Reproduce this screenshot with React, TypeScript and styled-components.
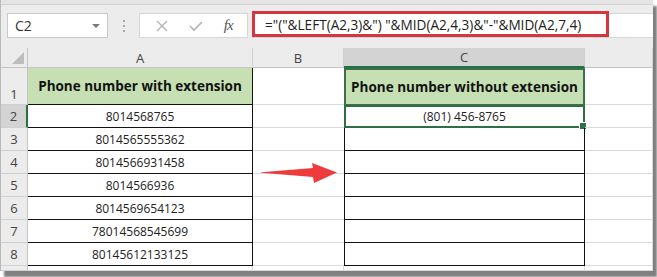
import styled, { createGlobalStyle, css } from "styled-components";

const GlobalStyle = createGlobalStyle`
  html, body {
    margin: 0;
    padding: 0;
    background: #ffffff;
  }
  * {
    box-sizing: border-box;
  }
`;

const Page = styled.div`
  width: 657px;
  height: 277px;
  background: #ffffff;
  overflow: hidden;
`;

const Window = styled.div`
  width: 653px;
  height: 271px;
  display: flex;
  flex-direction: column;
  background: #ececec;
  border-left: 1px solid #b9b9b9;
  box-shadow: 4px 6px 2px rgba(0, 0, 0, 0.5);
  font-family: "Open Sans", "Noto Sans", sans-serif;
  color: #222;
`;

const TopStrip = styled.div`
  height: 5px;
  background: #e4e4e4;
  border-bottom: 1px solid #d2d2d2;
`;

const Toolbar = styled.div`
  height: 43px;
  display: flex;
  align-items: flex-start;
  padding: 8px 0 0 6px;
`;

const NameBox = styled.div`
  width: 101px;
  height: 25px;
  display: flex;
  align-items: center;
  justify-content: space-between;
  padding: 0 7px 0 7px;
  background: #fff;
  border: 1px solid #c9c9c9;
  font-size: 14px;
  color: #333;
`;

const DropArrow = styled.span`
  width: 0;
  height: 0;
  border-left: 4px solid transparent;
  border-right: 4px solid transparent;
  border-top: 4px solid #7a7a7a;
`;

const Grip = styled.div`
  width: 31px;
  height: 25px;
  display: flex;
  flex-direction: column;
  align-items: center;
  justify-content: center;
  gap: 3px;
`;

const GripDot = styled.span`
  width: 2px;
  height: 2px;
  background: #a9a9a9;
`;

const FuncBox = styled.div`
  width: 109px;
  height: 25px;
  display: flex;
  align-items: center;
  justify-content: space-around;
  padding: 0 4px 0 6px;
  margin-right: 4px;
  background: #fff;
  border: 1px solid #d6d6d6;
`;

const Fx = styled.span`
  font-family: "Liberation Serif", serif;
  font-style: italic;
  font-size: 15px;
  color: #555;
  letter-spacing: -1px;
`;

const FormulaInput = styled.div`
  flex: 1;
  height: 25px;
  display: flex;
  align-items: flex-start;
  background: #fff;
  border-top: 1px solid #d6d6d6;
  border-bottom: 1px solid #d6d6d6;
`;

const Highlight = styled.div`
  width: 357px;
  height: 26px;
  margin-top: -3px;
  display: flex;
  align-items: center;
  padding-left: 10px;
  border: 3px solid #d7353d;
  font-size: 13.6px;
  color: #222;
  white-space: pre;
`;

const SheetWrap = styled.div`
  position: relative;
  flex: 1;
`;

const Sheet = styled.div`
  display: grid;
  grid-template-columns: 27px 225px 91px 241px 1fr;
  grid-template-rows: 20px 37px repeat(7, 23px) 1fr;
  height: 100%;
  background: #fff;
`;

const Corner = styled.div`
  background: #ececec;
  border-right: 1px solid #c4c4c4;
  border-bottom: 1px solid #c4c4c4;
  display: flex;
  align-items: flex-end;
  justify-content: flex-end;
  padding: 0 3px 3px 0;
`;

const Triangle = styled.span`
  width: 0;
  height: 0;
  border-left: 12px solid transparent;
  border-bottom: 12px solid #bdbdbd;
`;

const ColHead = styled.div<{ $active?: boolean }>`
  display: flex;
  align-items: center;
  justify-content: center;
  font-size: 13px;
  color: #444;
  background: #ececec;
  border-right: 1px solid #d0d0d0;
  border-bottom: 1px solid #c4c4c4;
  ${(p) =>
    p.$active &&
    css`
      background: #d3d3d3;
      border-bottom: 2px solid #217346;
    `}
`;

const RowHead = styled.div<{ $active?: boolean; $low?: boolean }>`
  display: flex;
  justify-content: center;
  align-items: ${(p) => (p.$low ? "flex-end" : "center")};
  padding-bottom: ${(p) => (p.$low ? "1px" : "0")};
  font-size: 13px;
  color: #444;
  background: #ececec;
  border-right: 1px solid #c4c4c4;
  border-bottom: 1px solid #d0d0d0;
  overflow: hidden;
  ${(p) =>
    p.$active &&
    css`
      background: #d3d3d3;
      border-right: 2px solid #217346;
    `}
`;

type Kind = "plain" | "edge" | "boxA" | "boxC" | "titleA" | "titleC" | "active";

const Cell = styled.div<{ $kind?: Kind }>`
  position: relative;
  display: flex;
  align-items: center;
  justify-content: center;
  font-size: 12px;
  color: #222;
  border-right: 1px solid #dadada;
  border-bottom: 1px solid #dadada;
  white-space: nowrap;
  ${(p) => p.$kind === "edge" && css`border-right: none;`}
  ${(p) =>
    p.$kind === "boxA" &&
    css`
      border-right: 1px solid #111;
      border-bottom: 1px solid #111;
    `}
  ${(p) =>
    p.$kind === "boxC" &&
    css`
      border-left: 1px solid #111;
      border-right: 1px solid #111;
      border-bottom: 1px solid #111;
    `}
  ${(p) =>
    (p.$kind === "titleA" || p.$kind === "titleC") &&
    css`
      background: #c6e0b4;
      font-weight: 700;
      font-size: 13.5px;
      color: #111;
    `}
  ${(p) =>
    p.$kind === "titleA" &&
    css`
      border-right: 1px solid #111;
      border-bottom: 1px solid #111;
    `}
  ${(p) =>
    p.$kind === "titleC" &&
    css`
      border: 2px solid #3d6f4c;
      border-bottom-width: 1px;
    `}
  ${(p) =>
    p.$kind === "active" &&
    css`
      border: 2px solid #2f6e46;
      &::after {
        content: "";
        position: absolute;
        right: -4px;
        bottom: -4px;
        width: 6px;
        height: 6px;
        background: #2f6e46;
        border: 1px solid #fff;
      }
    `}
`;

const Arrow = styled.svg`
  position: absolute;
  left: 260px;
  top: 114px;
`;

const phones = [
  "8014568765",
  "8014565555362",
  "8014566931458",
  "8014566936",
  "8014569654123",
  "78014568545699",
  "80145612133125",
];

const formula = `="("&LEFT(A2,3)&") "&MID(A2,4,3)&"-"&MID(A2,7,4)`;

const Row = ({ index, num }: { index: number; num: string }) => (
  <>
    <RowHead $active={index === 0}>{index + 2}</RowHead>
    <Cell $kind="boxA">{num}</Cell>
    <Cell $kind="edge" />
    <Cell $kind={index === 0 ? "active" : "boxC"}>{index === 0 ? "(801) 456-8765" : ""}</Cell>
    <Cell />
  </>
);

const App = (): JSX.Element => {
  return (
    <Page>
      <GlobalStyle />
      <Window>
        <TopStrip />
        <Toolbar>
          <NameBox>
            C2
            <DropArrow />
          </NameBox>
          <Grip>
            <GripDot />
            <GripDot />
            <GripDot />
          </Grip>
          <FuncBox>
            <svg width="12" height="12" viewBox="0 0 12 12">
              <path d="M1 1 L11 11 M11 1 L1 11" stroke="#b4b4b4" strokeWidth="1.4" />
            </svg>
            <svg width="14" height="12" viewBox="0 0 14 12">
              <path d="M1 6 L5 10 L13 2" stroke="#b4b4b4" strokeWidth="1.6" fill="none" />
            </svg>
            <Fx>fx</Fx>
          </FuncBox>
          <FormulaInput>
            <Highlight>{formula}</Highlight>
          </FormulaInput>
        </Toolbar>
        <SheetWrap>
          <Sheet>
            <Corner>
              <Triangle />
            </Corner>
            <ColHead>A</ColHead>
            <ColHead>B</ColHead>
            <ColHead $active>C</ColHead>
            <ColHead />

            <RowHead $low>1</RowHead>
            <Cell $kind="titleA">Phone number with extension</Cell>
            <Cell $kind="edge" />
            <Cell $kind="titleC">Phone number without extension</Cell>
            <Cell />

            {phones.map((num, i) => (
              <Row key={num} index={i} num={num} />
            ))}

            <RowHead />
            <Cell />
            <Cell />
            <Cell />
            <Cell />
          </Sheet>
          <Arrow width="77" height="22" viewBox="0 0 77 22">
            <path d="M0 10.3 L52 6 L51 1 L76 10.5 L53 21 L52 15 L0 10.8 Z" fill="#ef3b3b" />
          </Arrow>
        </SheetWrap>
      </Window>
    </Page>
  );
};

export default App;
